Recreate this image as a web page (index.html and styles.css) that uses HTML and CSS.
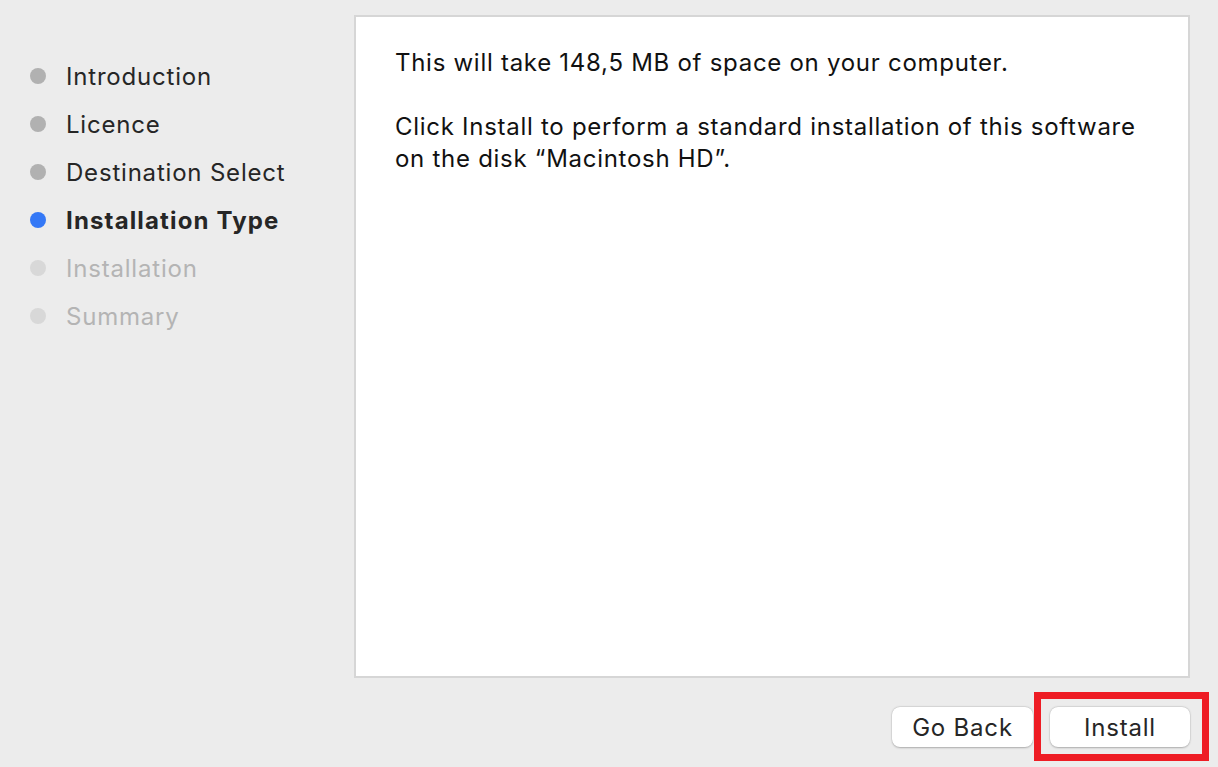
FILE: index.html
```html
<!DOCTYPE html>
<html>
<head>
<meta charset="utf-8">
<link rel="stylesheet" href="styles.css">
</head>
<body>
<div class="window">
  <aside class="steps">
    <div class="step done"><span class="dot"></span><span class="label">Introduction</span></div>
    <div class="step done"><span class="dot"></span><span class="label">Licence</span></div>
    <div class="step done"><span class="dot"></span><span class="label">Destination Select</span></div>
    <div class="step current"><span class="dot"></span><span class="label">Installation Type</span></div>
    <div class="step todo"><span class="dot"></span><span class="label">Installation</span></div>
    <div class="step todo"><span class="dot"></span><span class="label">Summary</span></div>
  </aside>
  <main class="content">
    <section class="panel">
      <p class="msg">This will take 148,5 MB of space on your computer.</p>
      <p class="msg">Click Install to perform a standard installation of this software on the disk “Macintosh HD”.</p>
    </section>
    <div class="buttons">
      <button class="btn">Go Back</button>
      <button class="btn primary">Install<span class="highlight"></span></button>
    </div>
  </main>
</div>
</body>
</html>
```
FILE: styles.css
```css
html, body {
  margin: 0;
  padding: 0;
  background: #ececec;
  width: 1218px;
  height: 767px;
  overflow: hidden;
  font-family: Inter, "Helvetica Neue", Arial, sans-serif;
}
.window {
  display: flex;
  height: 767px;
}
.steps {
  width: 354px;
  padding-top: 52px;
  box-sizing: border-box;
  display: flex;
  flex-direction: column;
}
.step {
  height: 48px;
  display: flex;
  align-items: center;
  padding-left: 30px;
  font-size: 24px;
  letter-spacing: 0.8px;
  color: #262626;
}
.dot {
  width: 16px;
  height: 16px;
  border-radius: 50%;
  background: #b1b1b1;
  margin-right: 20px;
  flex: none;
}
.step.current { font-weight: 700; letter-spacing: 1.15px; }
.step.current .dot { background: #3478f6; }
.step.todo { color: #b4b4b4; }
.step.todo .dot { background: #d8d8d8; }
.content {
  display: flex;
  flex-direction: column;
  padding-top: 15px;
}
.panel {
  width: 836px;
  height: 663px;
  box-sizing: border-box;
  background: #fff;
  border: 2px solid #d6d6d6;
  padding: 30px 40px 0 39px;
}
.msg {
  margin: 0 0 32px 0;
  font-size: 24px;
  letter-spacing: 0.72px;
  line-height: 32px;
  color: #111;
}
.buttons {
  display: flex;
  justify-content: flex-end;
  gap: 17px;
  margin-top: 29px;
  width: 836px;
}
.btn {
  position: relative;
  width: 141px;
  height: 40px;
  border: none;
  border-radius: 8px;
  background: #fff;
  box-shadow: 0 0.5px 2px rgba(0,0,0,0.25), 0 0 0 0.5px rgba(0,0,0,0.06);
  font-family: inherit;
  font-size: 24px;
  letter-spacing: 0.8px;
  color: #262626;
  padding: 0;
}
.btn.primary { width: 140px; }
.highlight {
  position: absolute;
  left: -16px;
  top: -15px;
  width: 175px;
  height: 69px;
  box-sizing: border-box;
  border: 7px solid #ee1c24;
  pointer-events: none;
}
```
